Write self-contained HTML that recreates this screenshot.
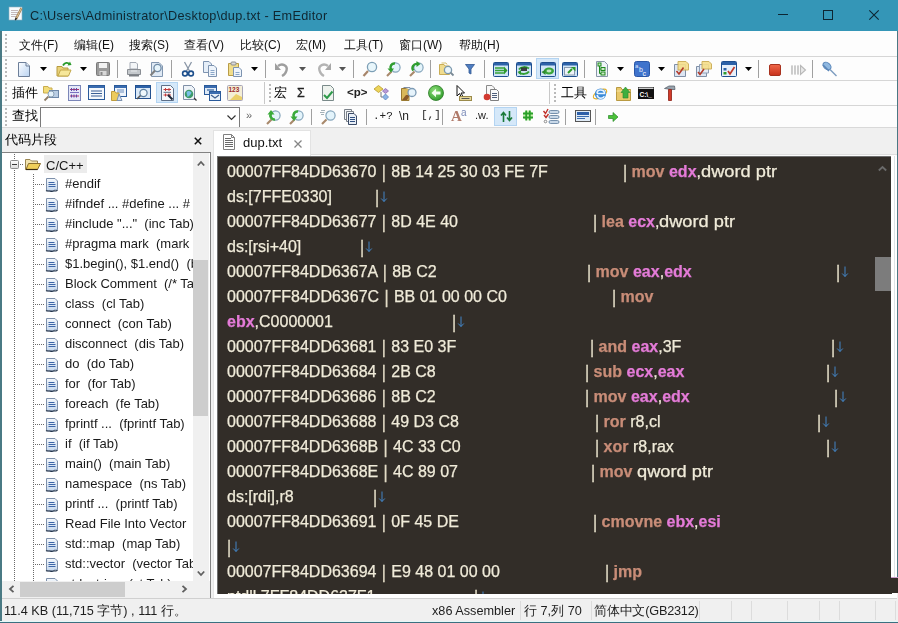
<!DOCTYPE html>
<html><head><meta charset="utf-8"><style>
*{margin:0;padding:0;box-sizing:border-box}
html,body{width:898px;height:623px;overflow:hidden;background:#f0f0f0;font-family:"Liberation Sans",sans-serif;color:#000;-webkit-font-smoothing:antialiased}
.a{position:absolute}
.t{position:absolute;white-space:pre;line-height:1;will-change:transform}
.hl{position:absolute;height:1px}
.vs{position:absolute;width:1px;background:#a8a8a8}
.grip{position:absolute;width:2px;background:repeating-linear-gradient(to bottom,#b9b9b9 0 2px,transparent 2px 4px)}
.menu{font-size:12px;top:39px;color:#111}
.ed{position:absolute;font-size:16px;color:#f0ebd9;-webkit-text-stroke-width:0.25px;white-space:pre;line-height:1;will-change:transform}
.kw{color:#c98d78;font-weight:bold}
.rg{color:#e47bd8;font-weight:bold}
.ar{color:#3d8fdc}
.bar{display:inline-block;transform:scaleY(1.12) translateY(0.8px);color:#e2dcc6}
.hb{margin:0 0.9px}
.arw{position:relative;display:inline-block;vertical-align:baseline;margin-left:1px;top:1px}
.tr{position:absolute;font-size:13px;color:#1a1a1a;white-space:pre;line-height:1;will-change:transform}
.st{position:absolute;font-size:12.7px;color:#1e1e1e;white-space:pre;line-height:1;will-change:transform}
svg{position:absolute;overflow:visible}
</style></head><body>
<div class="a" style="left:0;top:0;width:898px;height:31px;background:#3496b7"></div>
<div class="t" style="left:30px;top:10px;font-size:12.7px;letter-spacing:0.3px;color:#0f2630">C:\Users\Administrator\Desktop\dup.txt - EmEditor</div>
<svg style="left:9px;top:7px" width="14" height="14" viewBox="0 0 14 14"><rect x="0" y="0" width="13" height="13" fill="#f6fbfd" stroke="#8fb0c0" stroke-width=".6"/><path d="M2 3.5H9M2 5.5H9M2 7.5H8M2 9.5H7" stroke="#b8a8a8" stroke-width=".8"/><path d="M12.5 1L7 12" stroke="#a07a4a" stroke-width="2.4"/><path d="M12.5 1L7 12" stroke="#e8d0a8" stroke-width=".9"/><path d="M7.5 11L6.2 13" stroke="#222" stroke-width="1.4"/></svg>
<svg style="left:778px;top:14px" width="10" height="2" viewBox="0 0 10 2"><path d="M0 0.5H10" stroke="#0d2633" stroke-width="1"/></svg>
<svg style="left:823px;top:10px" width="10" height="10" viewBox="0 0 10 10"><rect x="0.5" y="0.5" width="9" height="9" fill="none" stroke="#0d2633"/></svg>
<svg style="left:869px;top:10px" width="10" height="10" viewBox="0 0 10 10"><path d="M0.3 0.3L9.7 9.7M9.7 0.3L0.3 9.7" stroke="#0d2633" stroke-width="1.1"/></svg>
<div class="a" style="left:2px;top:31px;width:895px;height:96px;background:#fdfdfd"></div>
<div class="hl" style="left:2px;top:56px;width:895px;background:#d6d6d6"></div>
<div class="hl" style="left:2px;top:80px;width:895px;background:#d6d6d6"></div>
<div class="hl" style="left:2px;top:105px;width:895px;background:#d6d6d6"></div>
<div class="hl" style="left:2px;top:127px;width:895px;background:#d9d9d9"></div>
<div class="grip" style="left:5px;top:34px;height:20px"></div>
<div class="grip" style="left:5px;top:59px;height:20px"></div>
<div class="grip" style="left:5px;top:83px;height:20px"></div>
<div class="grip" style="left:5px;top:108px;height:18px"></div>
<div class="t menu" style="left:19px">文件(F)</div>
<div class="t menu" style="left:74px">编辑(E)</div>
<div class="t menu" style="left:129px">搜索(S)</div>
<div class="t menu" style="left:184px">查看(V)</div>
<div class="t menu" style="left:240px">比较(C)</div>
<div class="t menu" style="left:296px">宏(M)</div>
<div class="t menu" style="left:344px">工具(T)</div>
<div class="t menu" style="left:399px">窗口(W)</div>
<div class="t menu" style="left:459px">帮助(H)</div>
<div class="t" style="left:12px;top:87px;font-size:12.5px">插件</div>
<div class="t" style="left:12px;top:110px;font-size:12.5px">查找</div>
<svg style="left:16px;top:61px" width="16" height="16" viewBox="0 0 16 16"><defs><linearGradient id="gnd" x1="0" y1="0" x2="1" y2="1"><stop offset="0" stop-color="#fdfeff"/><stop offset="1" stop-color="#b9d3f2"/></linearGradient></defs><path d="M2.5 1.5H10L13.5 5V15.5H2.5Z" fill="url(#gnd)" stroke="#6d7f99"/><path d="M10 1.5V5H13.5" fill="#dfe9f6" stroke="#6d7f99"/></svg>
<svg style="left:40px;top:67px" width="7" height="4" viewBox="0 0 7 4"><path d="M0 0H7L3.5 4Z" fill="#000"/></svg>
<svg style="left:56px;top:61px" width="16" height="16" viewBox="0 0 16 16"><path d="M1 5.5H6L7 7H12V15H1Z" fill="#e9d27a" stroke="#b79a3e"/><path d="M2 15L4.5 9H15L12.5 15Z" fill="#f6e79a" stroke="#c3a84a"/><path d="M7 4.5C8.5 1.5 12 1 13.5 3.5" fill="none" stroke="#2a9a2a" stroke-width="1.8"/><path d="M11.5 4.5L15.5 4L14 0.5Z" fill="#2a9a2a"/></svg>
<svg style="left:80px;top:67px" width="7" height="4" viewBox="0 0 7 4"><path d="M0 0H7L3.5 4Z" fill="#000"/></svg>
<svg style="left:95px;top:61px" width="16" height="16" viewBox="0 0 16 16"><rect x="1.5" y="1.5" width="13" height="13" rx="1" fill="#9a9a9a" stroke="#7a7a7a"/><rect x="4" y="2" width="8" height="5" fill="#f2f2f2"/><rect x="4.5" y="10" width="7" height="4.5" fill="#d8d8d8"/><rect x="5.5" y="11" width="2" height="3" fill="#888"/></svg>
<div class="vs" style="left:117px;top:60px;height:18px;background:#a0a0a0"></div>
<svg style="left:126px;top:61px" width="16" height="16" viewBox="0 0 16 16"><path d="M4 1.5H10L11.5 3V8H4Z" fill="#f4f6f8" stroke="#a4aab4"/><path d="M1.5 8.5H14.5V13.5H1.5Z" fill="#c4c8cc" stroke="#8a8e94"/><path d="M3 13.5H13V15.5H3Z" fill="#7a7e84"/><path d="M5 10H11" stroke="#e8eaec"/></svg>
<svg style="left:149px;top:61px" width="16" height="16" viewBox="0 0 16 16"><path d="M2.5 1.5H10L13.5 5V15.5H2.5Z" fill="#dfe9f4" stroke="#8196b0"/><circle cx="8.5" cy="7" r="3.6" fill="#e6f4fb" stroke="#6f8aa6" stroke-width="1.3"/><path d="M6 9.5L1.5 14.5" stroke="#7f7f7f" stroke-width="2"/></svg>
<div class="vs" style="left:171px;top:60px;height:18px;background:#a0a0a0"></div>
<svg style="left:180px;top:61px" width="16" height="16" viewBox="0 0 16 16"><path d="M4.5 1L9.5 10M11.5 1L6.5 10" stroke="#8a96a6" stroke-width="1.3"/><circle cx="5" cy="12.5" r="2.4" fill="none" stroke="#1d4f8c" stroke-width="1.6"/><circle cx="11" cy="12.5" r="2.4" fill="none" stroke="#1d4f8c" stroke-width="1.6"/></svg>
<svg style="left:202px;top:61px" width="16" height="16" viewBox="0 0 16 16"><path d="M1.5 0.5H7L9.5 3V11.5H1.5Z" fill="#e5eef8" stroke="#7d93b0"/><path d="M6.5 4.5H12L14.5 7V15.5H6.5Z" fill="#eef4fb" stroke="#7d93b0"/><path d="M8.5 9.5H12.5M8.5 11.5H12.5M8.5 13.5H12.5" stroke="#8aa6c8"/></svg>
<svg style="left:227px;top:61px" width="16" height="16" viewBox="0 0 16 16"><path d="M1.5 2.5H11.5V14.5H1.5Z" fill="#f1dd8a" stroke="#b89c48"/><rect x="4" y="1" width="5" height="3" rx="1" fill="#d9d9d9" stroke="#8d8d8d"/><path d="M6.5 6.5H12L14.5 9V15.5H6.5Z" fill="#eef4fb" stroke="#7d93b0"/><path d="M8.5 11.5H12.5M8.5 13.5H12.5" stroke="#8aa6c8"/></svg>
<svg style="left:251px;top:67px" width="7" height="4" viewBox="0 0 7 4"><path d="M0 0H7L3.5 4Z" fill="#000"/></svg>
<div class="vs" style="left:265px;top:60px;height:18px;background:#a0a0a0"></div>
<svg style="left:274px;top:61px" width="16" height="16" viewBox="0 0 16 16"><path d="M4 5C8 2 14 4 12.5 9.5C11.8 12 10 14 8 15" fill="none" stroke="#9e9e9e" stroke-width="2.4"/><path d="M1 2V9H7Z" fill="#9e9e9e"/></svg>
<svg style="left:299px;top:67px" width="7" height="4" viewBox="0 0 7 4"><path d="M0 0H7L3.5 4Z" fill="#555"/></svg>
<svg style="left:316px;top:61px" width="16" height="16" viewBox="0 0 16 16"><path d="M12 5C8 2 2 4 3.5 9.5C4.2 12 6 14 8 15" fill="none" stroke="#b4b4b4" stroke-width="2.4"/><path d="M15 2V9H9Z" fill="#a8a8a8"/></svg>
<svg style="left:339px;top:67px" width="7" height="4" viewBox="0 0 7 4"><path d="M0 0H7L3.5 4Z" fill="#555"/></svg>
<div class="vs" style="left:353px;top:60px;height:18px;background:#a0a0a0"></div>
<svg style="left:362px;top:61px" width="16" height="16" viewBox="0 0 16 16"><path d="M6 10L1.5 15" stroke="#a7856a" stroke-width="2.2"/><circle cx="10" cy="6" r="4.6" fill="#e8f6fb" stroke="#7d9fb6" stroke-width="1.3"/></svg>
<svg style="left:385px;top:61px" width="16" height="16" viewBox="0 0 16 16"><path d="M6.5 10.5L2 15" stroke="#a8896c" stroke-width="2.2"/><circle cx="10.5" cy="6.5" r="4.6" fill="#e4f4fb" stroke="#86a6bc" stroke-width="1.2"/><path d="M10 2.5A4 4 0 0 0 6 8.5" fill="none" stroke="#2f9e2f" stroke-width="2.4"/><path d="M2.5 7.5L6 11.5L9 7.5Z" fill="#2f9e2f"/></svg>
<svg style="left:408px;top:61px" width="16" height="16" viewBox="0 0 16 16"><path d="M6.5 10.5L2 15" stroke="#a8896c" stroke-width="2.2"/><circle cx="10.5" cy="6.5" r="4.6" fill="#e4f4fb" stroke="#86a6bc" stroke-width="1.2"/><path d="M5.5 9.5A4 4 0 0 1 9.5 3" fill="none" stroke="#2f9e2f" stroke-width="2.4"/><path d="M8.5 0L12.5 3L8.5 6Z" fill="#2f9e2f"/></svg>
<div class="vs" style="left:430px;top:60px;height:18px;background:#a0a0a0"></div>
<svg style="left:438px;top:61px" width="16" height="16" viewBox="0 0 16 16"><path d="M1.5 3.5H6L7 5H11.5V13.5H1.5Z" fill="#f0dc8e" stroke="#c9ad55"/><path d="M3.5 2H8L9 3.5" fill="none" stroke="#d7bf6a"/><circle cx="10" cy="9" r="3.6" fill="#eaf5fb" stroke="#7b98ad" stroke-width="1.3"/><path d="M12.5 11.5L15.5 14.5" stroke="#7a8a96" stroke-width="1.8"/></svg>
<svg style="left:465px;top:63px" width="10" height="12" viewBox="0 0 10 12"><path d="M0.5 1.5H9.5L6 6V11L4 10V6Z" fill="#4f7ec2" stroke="#2e5590" stroke-width="0.8"/></svg>
<div class="vs" style="left:484px;top:60px;height:18px;background:#a0a0a0"></div>
<svg style="left:493px;top:62px" width="16" height="16" viewBox="0 0 16 16"><rect x="0.5" y="0.5" width="15" height="14" rx="1" fill="#cfe4f7" stroke="#1f4f8f"/><rect x="1" y="1" width="14" height="2.5" fill="#2d62a8"/><path d="M2 6H11M2 8.5H11M2 11H11" stroke="#37a337" stroke-width="1.6"/><path d="M11 4.5L14.5 8.5L11 12.5Z" fill="#2e9a2e"/></svg>
<svg style="left:516px;top:62px" width="16" height="16" viewBox="0 0 16 16"><rect x="0.5" y="0.5" width="15" height="14" rx="1" fill="#cfe4f7" stroke="#1f4f8f"/><rect x="1" y="1" width="14" height="2.5" fill="#2d62a8"/><path d="M3 7.5C5 4.5 10 4.5 13 6.5" stroke="#34a134" stroke-width="2" fill="none"/><path d="M5 5.5H11V9H5Z" fill="#222" opacity=".85"/><path d="M13 9.5C11 12.5 6 12.5 3 10.5" stroke="#34a134" stroke-width="2" fill="none"/><path d="M1.5 10L5 8V13Z" fill="#2e9a2e"/></svg>
<div class="a" style="left:536px;top:58px;width:23px;height:21px;background:#d5e8f9;border:1px solid #b3d4f2"></div>
<svg style="left:540px;top:62px" width="16" height="16" viewBox="0 0 16 16"><rect x="0.5" y="0.5" width="15" height="14" rx="1" fill="#cfe4f7" stroke="#1f4f8f"/><rect x="1" y="1" width="14" height="2.5" fill="#2d62a8"/><ellipse cx="9" cy="9" rx="5" ry="3.4" fill="#3aa53a"/><ellipse cx="9" cy="9" rx="2.5" ry="1.4" fill="#bfe6bf"/><path d="M1.5 10L5.5 7.5V13Z" fill="#2e8a2e"/></svg>
<svg style="left:562px;top:62px" width="16" height="16" viewBox="0 0 16 16"><rect x="0.5" y="0.5" width="15" height="14" rx="1" fill="#cfe4f7" stroke="#1f4f8f"/><rect x="1" y="1" width="14" height="2.5" fill="#2d62a8"/><rect x="2.5" y="5.5" width="10" height="7.5" fill="#eef3f8" stroke="#8a9bb0"/><path d="M6 11L10 7" stroke="#2c9a2c" stroke-width="2"/><path d="M9 5L13.5 5L13.5 9.5Z" fill="#2c9a2c"/></svg>
<div class="vs" style="left:584px;top:60px;height:18px;background:#a0a0a0"></div>
<svg style="left:595px;top:61px" width="13" height="16" viewBox="0 0 13 16"><path d="M1.5 0.5H9.5L12.5 3.5V15.5H1.5Z" fill="#eef3f8" stroke="#8896a8"/><rect x="3" y="2" width="3" height="3" fill="#cde8c8" stroke="#1f8a1f"/><rect x="6" y="6.5" width="4" height="3" fill="#cde8c8" stroke="#1f8a1f"/><rect x="6" y="11" width="4" height="3" fill="#cde8c8" stroke="#1f8a1f"/><path d="M4.5 5V12.5H6M4.5 8H6" stroke="#1f8a1f" fill="none"/></svg>
<svg style="left:617px;top:67px" width="7" height="4" viewBox="0 0 7 4"><path d="M0 0H7L3.5 4Z" fill="#000"/></svg>
<svg style="left:634px;top:61px" width="16" height="16" viewBox="0 0 16 16"><rect x="0.5" y="0.5" width="15" height="15" rx="2" fill="#3f73cc" stroke="#2a56a6"/><text x="1" y="7" font-size="6" fill="#dfe9ff" font-family="Liberation Sans">a</text><text x="5" y="11" font-size="7" fill="#e8f0ff" font-family="Liberation Sans">b</text><text x="8.5" y="15" font-size="7" fill="#ffffff" font-family="Liberation Sans">c</text></svg>
<svg style="left:658px;top:67px" width="7" height="4" viewBox="0 0 7 4"><path d="M0 0H7L3.5 4Z" fill="#000"/></svg>
<svg style="left:673px;top:61px" width="16" height="16" viewBox="0 0 16 16"><path d="M1.5 3.5H12.5V15.5H1.5Z" fill="#dde6f3" stroke="#7f8fa6"/><path d="M5 0.5H13L15.5 3V9H5Z" fill="#f6df8a" stroke="#caa94e" opacity=".9"/><path d="M3.5 10L6 13L10.5 6.5" stroke="#b33a2a" stroke-width="1.6" fill="none"/></svg>
<svg style="left:696px;top:61px" width="16" height="16" viewBox="0 0 16 16"><path d="M0.5 5.5H10.5V15.5H0.5Z" fill="#dde6f3" stroke="#7f8fa6"/><path d="M3.5 3.5H12.5V12H3.5Z" fill="#e6ecf5" stroke="#8f9fb6"/><path d="M6 0.5H13L15.5 3V8H6Z" fill="#f6df8a" stroke="#caa94e" opacity=".9"/><path d="M2 11L4 13.5L8 8" stroke="#b33a2a" stroke-width="1.5" fill="none"/></svg>
<svg style="left:721px;top:61px" width="16" height="16" viewBox="0 0 16 16"><rect x="0.5" y="0.5" width="15" height="15" rx="1" fill="#e7f0fa" stroke="#1f4f8f"/><rect x="1" y="1" width="14" height="3" fill="#2d62a8"/><rect x="2.5" y="7" width="3" height="2.5" fill="#2d62a8"/><rect x="2.5" y="11" width="3" height="2.5" fill="#2e9a2e"/><path d="M7 10L9 13L13.5 6" stroke="#c0392b" stroke-width="1.7" fill="none"/></svg>
<svg style="left:745px;top:67px" width="7" height="4" viewBox="0 0 7 4"><path d="M0 0H7L3.5 4Z" fill="#000"/></svg>
<div class="vs" style="left:758px;top:60px;height:18px;background:#a0a0a0"></div>
<svg style="left:769px;top:64px" width="12" height="12" viewBox="0 0 12 12"><defs><linearGradient id="grs" x1="0" y1="0" x2="0" y2="1"><stop offset="0" stop-color="#f0684a"/><stop offset="1" stop-color="#c8321c"/></linearGradient></defs><rect x="0.5" y="0.5" width="11" height="11" rx="1.5" fill="url(#grs)" stroke="#a8321e"/></svg>
<svg style="left:791px;top:64px" width="15" height="12" viewBox="0 0 15 12"><path d="M1 1.5V10.5M4 1.5V10.5M7 1.5V10.5" stroke="#bdbdbd" stroke-width="2"/><path d="M1 1.5V10.5M4 1.5V10.5M7 1.5V10.5" stroke="#e6e6e6" stroke-width="0.7"/><path d="M9.5 1.5L14.5 6L9.5 10.5Z" fill="#e8e8e8" stroke="#b8b8b8" stroke-width="1.1"/></svg>
<div class="vs" style="left:812px;top:60px;height:18px;background:#a0a0a0"></div>
<svg style="left:821px;top:61px" width="16" height="16" viewBox="0 0 16 16"><ellipse cx="6" cy="5" rx="4.5" ry="3.2" transform="rotate(40 6 5)" fill="#8fb8e0" stroke="#5a86b8"/><path d="M9 8.5L15.5 15" stroke="#7d9cc0" stroke-width="1.4"/><path d="M2 4L8 10" stroke="#5a86b8" stroke-width="1.6"/></svg>
<svg style="left:43px;top:85px" width="16" height="16" viewBox="0 0 16 16"><path d="M0.5 1.5H5L6 3H9V8H0.5Z" fill="#f2dc78" stroke="#c8ab4c"/><rect x="6.5" y="5.5" width="9" height="7" fill="#b9cde3" stroke="#6d87a8"/><circle cx="8" cy="9" r="3" fill="#e3f1fa" stroke="#8aa0b4"/><path d="M5.5 11.5L1.5 15.5" stroke="#8d7c66" stroke-width="1.8"/></svg>
<svg style="left:68px;top:85px" width="13" height="16" viewBox="0 0 13 16"><rect x="0.5" y="0.5" width="12" height="15" fill="#e4e8f8" stroke="#7b86b8"/><path d="M2 4.5H11M2 11H11" stroke="#b0306a" stroke-width="1.2"/><path d="M3.5 3V6M6 3V6M8.5 3V6M3.5 9.5V12.5M6 9.5V12.5M8.5 9.5V12.5" stroke="#5b4aa8"/><path d="M2 7.5H11" stroke="#7a70c0"/></svg>
<svg style="left:88px;top:85px" width="17" height="16" viewBox="0 0 17 16"><rect x="0.5" y="0.5" width="16" height="14" fill="#f4f8fc" stroke="#2a5a9a"/><rect x="1" y="1" width="15" height="2" fill="#3a6cb0"/><path d="M3 6H14M3 8.5H14M3 11H14" stroke="#3a5f95" stroke-width="1.2"/></svg>
<svg style="left:111px;top:85px" width="16" height="16" viewBox="0 0 16 16"><rect x="3.5" y="0.5" width="12" height="11" fill="#eef4fb" stroke="#2a5a9a"/><rect x="4" y="1" width="11" height="2" fill="#3a6cb0"/><path d="M6 5H13M6 7H13" stroke="#6b8cbc"/><path d="M0.5 6.5H4L5 8H8V15.5H0.5Z" fill="#eccb5e" stroke="#bf9d3e"/><path d="M8 9L11 15.5H6Z" fill="#d6e2f2" stroke="#7d93b0"/></svg>
<svg style="left:135px;top:85px" width="16" height="16" viewBox="0 0 16 16"><rect x="0.5" y="0.5" width="15" height="13" fill="#dbe9f7" stroke="#22508f"/><rect x="1" y="1" width="14" height="2" fill="#2d62a8"/><circle cx="8.5" cy="8" r="3.6" fill="#eef7fc" stroke="#5d7f9f" stroke-width="1.2"/><path d="M5.5 10.5L2 14" stroke="#555" stroke-width="1.6"/></svg>
<div class="a" style="left:156px;top:82px;width:22px;height:21px;background:#d5e8f9;border:1px solid #b3d4f2"></div>
<svg style="left:161px;top:85px" width="13" height="16" viewBox="0 0 13 16"><path d="M0.5 0.5H9.5L12.5 3.5V15.5H0.5Z" fill="#f6f8fb" stroke="#5d6f88"/><path d="M2.5 4.5H10M2.5 10H10" stroke="#c23a3a" stroke-width="1.2"/><path d="M4.5 3V6M8 3V6M4.5 8.5V11.5M8 8.5V11.5" stroke="#c23a3a"/><path d="M2.5 7.3H10" stroke="#5d6f88"/><path d="M7 10L11.5 14.5" stroke="#1e2a3a" stroke-width="2"/></svg>
<svg style="left:183px;top:85px" width="14" height="16" viewBox="0 0 14 16"><path d="M0.5 0.5H8.5L11.5 3.5V14.5H0.5Z" fill="#eef3f8" stroke="#7f8fa6"/><circle cx="6" cy="9" r="4.3" fill="#3d9a6a"/><path d="M3.5 7C5 5.5 7 6 8.5 7.5C8 9.5 6 11 4.5 12" fill="#79c0e8"/><path d="M11 13L13.5 15.5" stroke="#333" stroke-width="1.2"/></svg>
<svg style="left:204px;top:85px" width="17" height="16" viewBox="0 0 17 16"><rect x="0.5" y="0.5" width="12" height="9" fill="#dfeaf6" stroke="#2a5a9a"/><rect x="1" y="1" width="11" height="2" fill="#3a6cb0"/><path d="M3 5H10" stroke="#4a74ac" stroke-width="1.4"/><rect x="5.5" y="6.5" width="11" height="9" fill="#e8f0f8" stroke="#2a5a9a"/><rect x="6" y="7" width="10" height="2" fill="#3a6cb0"/><path d="M7 10L11 13L15 10" stroke="#3d5f8f" fill="none" stroke-width="1.2"/></svg>
<svg style="left:227px;top:85px" width="16" height="16" viewBox="0 0 16 16"><rect x="0.5" y="0.5" width="15" height="15" rx="1" fill="#f4eed6" stroke="#a8a6b8"/><text x="1.5" y="7" font-size="6.5" fill="#9a2a2a" font-family="Liberation Sans" font-weight="bold">123</text><path d="M3 15L9 9L15 12V15Z" fill="#eacf6a"/></svg>
<div class="vs" style="left:264px;top:82px;height:22px;background:#c8c8c8"></div>
<div class="grip" style="left:269px;top:84px;height:19px"></div>
<div class="t" style="left:274px;top:87px;font-size:12.5px">宏</div>
<div class="t" style="left:297px;top:87px;font-size:12.5px;color:#222;-webkit-text-stroke-width:0.3px">Σ</div>
<svg style="left:322px;top:85px" width="12" height="16" viewBox="0 0 12 16"><path d="M0.5 0.5H8.5L11.5 3.5V15.5H0.5Z" fill="#eef3ee" stroke="#7a8a8a"/><path d="M2 10L5 13L10.5 6.5" stroke="#2e9a4a" stroke-width="2" fill="none"/></svg>
<div class="t" style="left:347px;top:87px;font-size:11.5px;font-weight:bold;color:#222">&lt;p&gt;</div>
<svg style="left:374px;top:85px" width="16" height="16" viewBox="0 0 16 16"><path d="M4.5 0.5L9 4L4.5 7.5L0 4Z" fill="#ecd45a" stroke="#b89a2a" stroke-width=".8"/><path d="M11.5 3.5L14.5 6L11.5 8.5L8.5 6Z" fill="#b79ad6" stroke="#8a6ab0" stroke-width=".8"/><path d="M11.5 9L14.5 12L11.5 15L8.5 12Z" fill="#8cb4e6" stroke="#5a84bc" stroke-width=".8"/><path d="M7 7V12H8.5" stroke="#777" fill="none"/></svg>
<svg style="left:401px;top:85px" width="16" height="16" viewBox="0 0 16 16"><path d="M0.5 3.5H8V15.5H0.5Z" fill="#d9b85a" stroke="#9a7a32"/><path d="M2.5 2.5H9L11 5" fill="#eef3f8" stroke="#7f8fa6"/><path d="M1 15L5 10H9L6 15Z" fill="#8a5a2a"/><circle cx="11" cy="7.5" r="4" fill="#e6f3fb" stroke="#7d9bb5" stroke-width="1.3"/></svg>
<svg style="left:428px;top:85px" width="16" height="16" viewBox="0 0 16 16"><defs><radialGradient id="ggc" cx=".4" cy=".35" r=".7"><stop offset="0" stop-color="#8fe07a"/><stop offset="1" stop-color="#2e9a2a"/></radialGradient></defs><circle cx="8" cy="8" r="7.5" fill="url(#ggc)" stroke="#2a7a24" stroke-width=".8"/><path d="M3.5 8L8 3.8V6.5H12.5V9.5H8V12.2Z" fill="#f4fff0"/></svg>
<svg style="left:456px;top:85px" width="16" height="16" viewBox="0 0 16 16"><path d="M1 0.5V11L3.5 8.5L5.5 12.5L7 11.7L5 8H8.5Z" fill="#fff" stroke="#111" stroke-width="1"/><rect x="3.5" y="11.5" width="12" height="4" fill="#e6d79a" stroke="#9a8a4a"/><path d="M5.5 13.5H13.5" stroke="#555"/></svg>
<svg style="left:483px;top:85px" width="16" height="16" viewBox="0 0 16 16"><path d="M3.5 0.5H9L11.5 3V11H3.5Z" fill="#f8f8f8" stroke="#8a8a8a"/><path d="M7.5 4.5H13.5L15.5 6.5V15.5H7.5Z" fill="#fafafa" stroke="#7f7f7f"/><path d="M9 8.5H14M9 10.5H14M9 12.5H14" stroke="#4f5f7a"/><circle cx="4" cy="12" r="3.3" fill="#d23a30"/></svg>
<div class="vs" style="left:549px;top:82px;height:22px;background:#c8c8c8"></div>
<div class="grip" style="left:554px;top:84px;height:19px"></div>
<div class="t" style="left:561px;top:87px;font-size:12.5px">工具</div>
<svg style="left:592px;top:85px" width="16" height="16" viewBox="0 0 16 16"><ellipse cx="8" cy="9" rx="7.5" ry="3.5" fill="none" stroke="#e3b02a" stroke-width="1.2" transform="rotate(-30 8 9)"/><circle cx="8.5" cy="9" r="5.6" fill="#3a8ad8"/><path d="M5 8.5H12.5C12.5 6 11 5 8.5 5C6.5 5 5 6.5 5 8.5M5.2 10C5.5 12 7 13.2 9 13.2C10.5 13.2 11.8 12.5 12.3 11.3" fill="none" stroke="#e8f4ff" stroke-width="1.6"/></svg>
<svg style="left:616px;top:85px" width="16" height="16" viewBox="0 0 16 16"><path d="M0.5 2.5H5L6 4.5H14.5V15.5H0.5Z" fill="#e9c86a" stroke="#b99a42"/><path d="M0.5 6H14.5" stroke="#f6e3a0"/><path d="M7 13V7.5H5L9.5 2L14 7.5H12V13Z" fill="#3fae3f" stroke="#2a8a2a" stroke-width=".6"/></svg>
<svg style="left:638px;top:85px" width="16" height="16" viewBox="0 0 16 16"><rect x="0" y="2" width="16" height="12" fill="#111"/><rect x="0.5" y="2.5" width="15" height="1.5" fill="#ccc"/><text x="1.5" y="11.5" font-size="6.5" fill="#fff" font-family="Liberation Sans" font-weight="bold">C:\_</text></svg>
<svg style="left:663px;top:85px" width="13" height="16" viewBox="0 0 13 16"><path d="M1.5 3.5L6 1H11.5L12 4.5L9 4.5Z" fill="#9aa4ae" stroke="#5a646e" stroke-width=".8"/><path d="M5.5 4.5H8.5V15.5H5.5Z" fill="#d23a2a" stroke="#8a1e14" stroke-width=".8"/></svg>
<div class="a" style="left:40px;top:107px;width:200px;height:20px;background:#fff;border:1px solid #7a7a7a;border-bottom:none"></div>
<svg style="left:227px;top:115px" width="9" height="6" viewBox="0 0 9 6"><path d="M0.5 0.5L4.5 4.5L8.5 0.5" fill="none" stroke="#333" stroke-width="1.2"/></svg>
<div class="t" style="left:246px;top:110px;font-size:11px;color:#666">»</div>
<svg style="left:265px;top:109px" width="16" height="16" viewBox="0 0 16 16"><path d="M6.5 10.5L2 15" stroke="#a8896c" stroke-width="2.2"/><circle cx="10.5" cy="6.5" r="4.6" fill="#e4f4fb" stroke="#86a6bc" stroke-width="1.2"/><path d="M10 10.5A4 4 0 0 1 6 4.5" fill="none" stroke="#3aaa3a" stroke-width="2.6"/><path d="M2.5 5.5L6 1L9.5 5.5Z" fill="#3aaa3a"/></svg>
<svg style="left:288px;top:109px" width="16" height="16" viewBox="0 0 16 16"><path d="M6.5 10.5L2 15" stroke="#a8896c" stroke-width="2.2"/><circle cx="10.5" cy="6.5" r="4.6" fill="#e4f4fb" stroke="#86a6bc" stroke-width="1.2"/><path d="M10 2.5A4 4 0 0 0 6 8.5" fill="none" stroke="#3aaa3a" stroke-width="2.6"/><path d="M2.5 7.5L6 12L9.5 7.5Z" fill="#3aaa3a"/></svg>
<div class="vs" style="left:311px;top:109px;height:16px;background:#a0a0a0"></div>
<svg style="left:320px;top:109px" width="16" height="16" viewBox="0 0 16 16"><path d="M6.5 10.5L2 15" stroke="#a8896c" stroke-width="2.2"/><circle cx="10.5" cy="6.5" r="4.6" fill="#e4f4fb" stroke="#86a6bc" stroke-width="1.2"/><path d="M1 1.5H5M0 3.5H4.5M1 5.5H4" stroke="#9aa8b0" stroke-width="0.9"/></svg>
<svg style="left:344px;top:109px" width="13" height="16" viewBox="0 0 13 16"><path d="M0.5 0.5H7.5V10.5H0.5Z" fill="#f4f6f8" stroke="#7a8088"/><path d="M2.5 2.5H9.5V12.5H2.5Z" fill="#f4f6f8" stroke="#7a8088"/><path d="M4.5 4.5H10L12.5 7V15.5H4.5Z" fill="#e8eef6" stroke="#3a4a66"/><path d="M6 8.5H11M6 10.5H11M6 12.5H11" stroke="#2f4f80"/></svg>
<div class="vs" style="left:366px;top:109px;height:16px;background:#a0a0a0"></div>
<div class="t" style="left:373px;top:111px;font-size:11px;color:#222;font-family:'Liberation Mono'">.+?</div>
<div class="t" style="left:399px;top:110px;font-size:12px;color:#222">\n</div>
<div class="t" style="left:421px;top:110px;font-size:11px;color:#222;font-family:'Liberation Mono'">[,]</div>
<div class="vs" style="left:442px;top:109px;height:16px;background:#a0a0a0"></div>
<div class="t" style="left:451px;top:109px;font-size:15px;color:#b07a6a;font-family:'Liberation Serif';font-weight:bold">A</div>
<div class="t" style="left:461px;top:108px;font-size:10px;color:#7a8ab8">a</div>
<div class="t" style="left:475px;top:110px;font-size:11px;color:#222">.w.</div>
<div class="a" style="left:494px;top:107px;width:23px;height:19px;background:#d5e8f9;border:1px solid #b3d4f2"></div>
<svg style="left:500px;top:110px" width="13" height="13" viewBox="0 0 13 13"><path d="M3.5 12V3M1 5.5L3.5 2.5L6 5.5" stroke="#1a7a3a" stroke-width="1.6" fill="none"/><path d="M9.5 1V10M7 7.5L9.5 10.5L12 7.5" stroke="#1a7a3a" stroke-width="1.6" fill="none"/></svg>
<svg style="left:523px;top:110px" width="11" height="11" viewBox="0 0 11 11"><circle cx="5" cy="5.5" r="5" fill="#c8f0b0"/><path d="M3.2 0.5V10.5M6.8 0.5V10.5M0 3.5H10M0 7.5H10" stroke="#2aa02a" stroke-width="1.8"/></svg>
<svg style="left:543px;top:109px" width="17" height="16" viewBox="0 0 17 16"><path d="M0.5 2L2.5 4.5L5 0" stroke="#c0302a" stroke-width="1.4" fill="none"/><path d="M1 6L3 8.5L5.5 5" stroke="#c0302a" stroke-width="1.4" fill="none"/><circle cx="2.5" cy="12.5" r="1.3" fill="none" stroke="#888"/><rect x="6" y="1.5" width="10" height="3" rx="1.5" fill="#c8d8e8" stroke="#5a7a9a" stroke-width=".8"/><rect x="6" y="6.5" width="10" height="3" rx="1.5" fill="#c8d8e8" stroke="#5a7a9a" stroke-width=".8"/><rect x="6" y="11.5" width="10" height="3" rx="1.5" fill="#c8d8e8" stroke="#5a7a9a" stroke-width=".8"/></svg>
<div class="vs" style="left:565px;top:109px;height:16px;background:#a0a0a0"></div>
<svg style="left:575px;top:110px" width="16" height="12" viewBox="0 0 16 12"><rect x="0.5" y="0.5" width="15" height="11" fill="#e0ebf6" stroke="#555"/><rect x="2" y="2" width="12" height="3" fill="#2d5fa8"/><path d="M2 6.5H14M2 8.5H10" stroke="#3a6cb0"/></svg>
<div class="vs" style="left:595px;top:109px;height:16px;background:#a0a0a0"></div>
<svg style="left:608px;top:112px" width="11" height="10" viewBox="0 0 11 10"><path d="M0.5 3.5H5V0.5L10 5L5 9.5V6.5H0.5Z" fill="#4cc23a" stroke="#2a8a2a" stroke-width=".7"/></svg>
<div class="t" style="left:5px;top:134px;font-size:12.5px">代码片段</div>
<div class="a" style="left:2px;top:152px;width:209px;height:447px;background:#fff;border-top:1px solid #828282;border-right:1px solid #828282"></div>
<div class="a" style="left:2px;top:153px;width:191px;height:428px;overflow:hidden">
<div class="a" style="left:12px;top:1px;width:1px;height:6px;background:repeating-linear-gradient(to bottom,#6a6a6a 0 1px,transparent 1px 2px)"></div>
<div class="a" style="left:12px;top:17px;width:1px;height:420px;background:repeating-linear-gradient(to bottom,#6a6a6a 0 1px,transparent 1px 2px)"></div>
<div class="a" style="left:31px;top:21px;width:1px;height:420px;background:repeating-linear-gradient(to bottom,#6a6a6a 0 1px,transparent 1px 2px)"></div>
<div class="a" style="left:18px;top:11px;width:4px;height:1px;background:repeating-linear-gradient(to right,#6a6a6a 0 1px,transparent 1px 2px)"></div>
<svg style="left:8px;top:7px" width="9" height="9" viewBox="0 0 9 9"><defs><linearGradient id="gbx" x1="0" y1="0" x2="0" y2="1"><stop offset="0" stop-color="#fff"/><stop offset="1" stop-color="#dcdcdc"/></linearGradient></defs><rect x="0.5" y="0.5" width="8" height="8" rx="1" fill="url(#gbx)" stroke="#8c8c8c"/><path d="M2 4.5H7" stroke="#3a3a3a"/></svg>
<svg style="left:23px;top:5px" width="16" height="12" viewBox="0 0 16 12"><path d="M0.5 1.5H5L6.5 3H12.5V11.5H0.5Z" fill="#f2e4b0" stroke="#9a8652"/><path d="M1 11.5L3.5 5.5H15.5L12.5 11.5Z" fill="#f0cf5a" stroke="#8a6e2e"/><path d="M1 11.5H12.5" stroke="#3a2a10" stroke-width="1.2"/></svg>
<div class="a" style="left:42px;top:2px;width:43px;height:18px;background:#ececec"></div>
<div class="tr" style="left:44px;top:6px">C/C++</div>
<div class="a" style="left:33px;top:31px;width:9px;height:1px;background:repeating-linear-gradient(to right,#6a6a6a 0 1px,transparent 1px 2px)"></div>
<svg style="left:44px;top:25px" width="12" height="14" viewBox="0 0 12 14"><defs><linearGradient id="gsn" x1="0" y1="0" x2="0" y2="1"><stop offset="0" stop-color="#f4f8fc"/><stop offset="1" stop-color="#c6d8ee"/></linearGradient></defs><path d="M0.5 0.5H9L11.5 3V11.5C10 12.5 9 11.5 7.5 12.5C6 13.5 4.5 12 3 12.8C2 13.3 1 12.5 0.5 12Z" fill="url(#gsn)" stroke="#7e90aa"/><path d="M2.5 4.5H8.5M2.5 6.5H9.5M2.5 8.5H9.5" stroke="#3d66a8" stroke-width="1"/><path d="M0 12.5C1.5 13.5 3 12.5 4.5 13.2C6 14 7 12.5 9 13C10 13.2 11 12.8 11.5 12" stroke="#22334a" fill="none" stroke-width="1.1"/></svg>
<div class="tr" style="left:63px;top:24px">#endif</div>
<div class="a" style="left:33px;top:51px;width:9px;height:1px;background:repeating-linear-gradient(to right,#6a6a6a 0 1px,transparent 1px 2px)"></div>
<svg style="left:44px;top:45px" width="12" height="14" viewBox="0 0 12 14"><defs><linearGradient id="gsn" x1="0" y1="0" x2="0" y2="1"><stop offset="0" stop-color="#f4f8fc"/><stop offset="1" stop-color="#c6d8ee"/></linearGradient></defs><path d="M0.5 0.5H9L11.5 3V11.5C10 12.5 9 11.5 7.5 12.5C6 13.5 4.5 12 3 12.8C2 13.3 1 12.5 0.5 12Z" fill="url(#gsn)" stroke="#7e90aa"/><path d="M2.5 4.5H8.5M2.5 6.5H9.5M2.5 8.5H9.5" stroke="#3d66a8" stroke-width="1"/><path d="M0 12.5C1.5 13.5 3 12.5 4.5 13.2C6 14 7 12.5 9 13C10 13.2 11 12.8 11.5 12" stroke="#22334a" fill="none" stroke-width="1.1"/></svg>
<div class="tr" style="left:63px;top:44px">#ifndef ... #define ... #</div>
<div class="a" style="left:33px;top:71px;width:9px;height:1px;background:repeating-linear-gradient(to right,#6a6a6a 0 1px,transparent 1px 2px)"></div>
<svg style="left:44px;top:65px" width="12" height="14" viewBox="0 0 12 14"><defs><linearGradient id="gsn" x1="0" y1="0" x2="0" y2="1"><stop offset="0" stop-color="#f4f8fc"/><stop offset="1" stop-color="#c6d8ee"/></linearGradient></defs><path d="M0.5 0.5H9L11.5 3V11.5C10 12.5 9 11.5 7.5 12.5C6 13.5 4.5 12 3 12.8C2 13.3 1 12.5 0.5 12Z" fill="url(#gsn)" stroke="#7e90aa"/><path d="M2.5 4.5H8.5M2.5 6.5H9.5M2.5 8.5H9.5" stroke="#3d66a8" stroke-width="1"/><path d="M0 12.5C1.5 13.5 3 12.5 4.5 13.2C6 14 7 12.5 9 13C10 13.2 11 12.8 11.5 12" stroke="#22334a" fill="none" stroke-width="1.1"/></svg>
<div class="tr" style="left:63px;top:64px">#include "..."  (inc Tab)</div>
<div class="a" style="left:33px;top:91px;width:9px;height:1px;background:repeating-linear-gradient(to right,#6a6a6a 0 1px,transparent 1px 2px)"></div>
<svg style="left:44px;top:85px" width="12" height="14" viewBox="0 0 12 14"><defs><linearGradient id="gsn" x1="0" y1="0" x2="0" y2="1"><stop offset="0" stop-color="#f4f8fc"/><stop offset="1" stop-color="#c6d8ee"/></linearGradient></defs><path d="M0.5 0.5H9L11.5 3V11.5C10 12.5 9 11.5 7.5 12.5C6 13.5 4.5 12 3 12.8C2 13.3 1 12.5 0.5 12Z" fill="url(#gsn)" stroke="#7e90aa"/><path d="M2.5 4.5H8.5M2.5 6.5H9.5M2.5 8.5H9.5" stroke="#3d66a8" stroke-width="1"/><path d="M0 12.5C1.5 13.5 3 12.5 4.5 13.2C6 14 7 12.5 9 13C10 13.2 11 12.8 11.5 12" stroke="#22334a" fill="none" stroke-width="1.1"/></svg>
<div class="tr" style="left:63px;top:84px">#pragma mark  (mark Tab)</div>
<div class="a" style="left:33px;top:111px;width:9px;height:1px;background:repeating-linear-gradient(to right,#6a6a6a 0 1px,transparent 1px 2px)"></div>
<svg style="left:44px;top:105px" width="12" height="14" viewBox="0 0 12 14"><defs><linearGradient id="gsn" x1="0" y1="0" x2="0" y2="1"><stop offset="0" stop-color="#f4f8fc"/><stop offset="1" stop-color="#c6d8ee"/></linearGradient></defs><path d="M0.5 0.5H9L11.5 3V11.5C10 12.5 9 11.5 7.5 12.5C6 13.5 4.5 12 3 12.8C2 13.3 1 12.5 0.5 12Z" fill="url(#gsn)" stroke="#7e90aa"/><path d="M2.5 4.5H8.5M2.5 6.5H9.5M2.5 8.5H9.5" stroke="#3d66a8" stroke-width="1"/><path d="M0 12.5C1.5 13.5 3 12.5 4.5 13.2C6 14 7 12.5 9 13C10 13.2 11 12.8 11.5 12" stroke="#22334a" fill="none" stroke-width="1.1"/></svg>
<div class="tr" style="left:63px;top:104px">$1.begin(), $1.end()  (b Tab)</div>
<div class="a" style="left:33px;top:131px;width:9px;height:1px;background:repeating-linear-gradient(to right,#6a6a6a 0 1px,transparent 1px 2px)"></div>
<svg style="left:44px;top:125px" width="12" height="14" viewBox="0 0 12 14"><defs><linearGradient id="gsn" x1="0" y1="0" x2="0" y2="1"><stop offset="0" stop-color="#f4f8fc"/><stop offset="1" stop-color="#c6d8ee"/></linearGradient></defs><path d="M0.5 0.5H9L11.5 3V11.5C10 12.5 9 11.5 7.5 12.5C6 13.5 4.5 12 3 12.8C2 13.3 1 12.5 0.5 12Z" fill="url(#gsn)" stroke="#7e90aa"/><path d="M2.5 4.5H8.5M2.5 6.5H9.5M2.5 8.5H9.5" stroke="#3d66a8" stroke-width="1"/><path d="M0 12.5C1.5 13.5 3 12.5 4.5 13.2C6 14 7 12.5 9 13C10 13.2 11 12.8 11.5 12" stroke="#22334a" fill="none" stroke-width="1.1"/></svg>
<div class="tr" style="left:63px;top:124px">Block Comment  (/* Tab)</div>
<div class="a" style="left:33px;top:151px;width:9px;height:1px;background:repeating-linear-gradient(to right,#6a6a6a 0 1px,transparent 1px 2px)"></div>
<svg style="left:44px;top:145px" width="12" height="14" viewBox="0 0 12 14"><defs><linearGradient id="gsn" x1="0" y1="0" x2="0" y2="1"><stop offset="0" stop-color="#f4f8fc"/><stop offset="1" stop-color="#c6d8ee"/></linearGradient></defs><path d="M0.5 0.5H9L11.5 3V11.5C10 12.5 9 11.5 7.5 12.5C6 13.5 4.5 12 3 12.8C2 13.3 1 12.5 0.5 12Z" fill="url(#gsn)" stroke="#7e90aa"/><path d="M2.5 4.5H8.5M2.5 6.5H9.5M2.5 8.5H9.5" stroke="#3d66a8" stroke-width="1"/><path d="M0 12.5C1.5 13.5 3 12.5 4.5 13.2C6 14 7 12.5 9 13C10 13.2 11 12.8 11.5 12" stroke="#22334a" fill="none" stroke-width="1.1"/></svg>
<div class="tr" style="left:63px;top:144px">class  (cl Tab)</div>
<div class="a" style="left:33px;top:171px;width:9px;height:1px;background:repeating-linear-gradient(to right,#6a6a6a 0 1px,transparent 1px 2px)"></div>
<svg style="left:44px;top:165px" width="12" height="14" viewBox="0 0 12 14"><defs><linearGradient id="gsn" x1="0" y1="0" x2="0" y2="1"><stop offset="0" stop-color="#f4f8fc"/><stop offset="1" stop-color="#c6d8ee"/></linearGradient></defs><path d="M0.5 0.5H9L11.5 3V11.5C10 12.5 9 11.5 7.5 12.5C6 13.5 4.5 12 3 12.8C2 13.3 1 12.5 0.5 12Z" fill="url(#gsn)" stroke="#7e90aa"/><path d="M2.5 4.5H8.5M2.5 6.5H9.5M2.5 8.5H9.5" stroke="#3d66a8" stroke-width="1"/><path d="M0 12.5C1.5 13.5 3 12.5 4.5 13.2C6 14 7 12.5 9 13C10 13.2 11 12.8 11.5 12" stroke="#22334a" fill="none" stroke-width="1.1"/></svg>
<div class="tr" style="left:63px;top:164px">connect  (con Tab)</div>
<div class="a" style="left:33px;top:191px;width:9px;height:1px;background:repeating-linear-gradient(to right,#6a6a6a 0 1px,transparent 1px 2px)"></div>
<svg style="left:44px;top:185px" width="12" height="14" viewBox="0 0 12 14"><defs><linearGradient id="gsn" x1="0" y1="0" x2="0" y2="1"><stop offset="0" stop-color="#f4f8fc"/><stop offset="1" stop-color="#c6d8ee"/></linearGradient></defs><path d="M0.5 0.5H9L11.5 3V11.5C10 12.5 9 11.5 7.5 12.5C6 13.5 4.5 12 3 12.8C2 13.3 1 12.5 0.5 12Z" fill="url(#gsn)" stroke="#7e90aa"/><path d="M2.5 4.5H8.5M2.5 6.5H9.5M2.5 8.5H9.5" stroke="#3d66a8" stroke-width="1"/><path d="M0 12.5C1.5 13.5 3 12.5 4.5 13.2C6 14 7 12.5 9 13C10 13.2 11 12.8 11.5 12" stroke="#22334a" fill="none" stroke-width="1.1"/></svg>
<div class="tr" style="left:63px;top:184px">disconnect  (dis Tab)</div>
<div class="a" style="left:33px;top:211px;width:9px;height:1px;background:repeating-linear-gradient(to right,#6a6a6a 0 1px,transparent 1px 2px)"></div>
<svg style="left:44px;top:205px" width="12" height="14" viewBox="0 0 12 14"><defs><linearGradient id="gsn" x1="0" y1="0" x2="0" y2="1"><stop offset="0" stop-color="#f4f8fc"/><stop offset="1" stop-color="#c6d8ee"/></linearGradient></defs><path d="M0.5 0.5H9L11.5 3V11.5C10 12.5 9 11.5 7.5 12.5C6 13.5 4.5 12 3 12.8C2 13.3 1 12.5 0.5 12Z" fill="url(#gsn)" stroke="#7e90aa"/><path d="M2.5 4.5H8.5M2.5 6.5H9.5M2.5 8.5H9.5" stroke="#3d66a8" stroke-width="1"/><path d="M0 12.5C1.5 13.5 3 12.5 4.5 13.2C6 14 7 12.5 9 13C10 13.2 11 12.8 11.5 12" stroke="#22334a" fill="none" stroke-width="1.1"/></svg>
<div class="tr" style="left:63px;top:204px">do  (do Tab)</div>
<div class="a" style="left:33px;top:231px;width:9px;height:1px;background:repeating-linear-gradient(to right,#6a6a6a 0 1px,transparent 1px 2px)"></div>
<svg style="left:44px;top:225px" width="12" height="14" viewBox="0 0 12 14"><defs><linearGradient id="gsn" x1="0" y1="0" x2="0" y2="1"><stop offset="0" stop-color="#f4f8fc"/><stop offset="1" stop-color="#c6d8ee"/></linearGradient></defs><path d="M0.5 0.5H9L11.5 3V11.5C10 12.5 9 11.5 7.5 12.5C6 13.5 4.5 12 3 12.8C2 13.3 1 12.5 0.5 12Z" fill="url(#gsn)" stroke="#7e90aa"/><path d="M2.5 4.5H8.5M2.5 6.5H9.5M2.5 8.5H9.5" stroke="#3d66a8" stroke-width="1"/><path d="M0 12.5C1.5 13.5 3 12.5 4.5 13.2C6 14 7 12.5 9 13C10 13.2 11 12.8 11.5 12" stroke="#22334a" fill="none" stroke-width="1.1"/></svg>
<div class="tr" style="left:63px;top:224px">for  (for Tab)</div>
<div class="a" style="left:33px;top:251px;width:9px;height:1px;background:repeating-linear-gradient(to right,#6a6a6a 0 1px,transparent 1px 2px)"></div>
<svg style="left:44px;top:245px" width="12" height="14" viewBox="0 0 12 14"><defs><linearGradient id="gsn" x1="0" y1="0" x2="0" y2="1"><stop offset="0" stop-color="#f4f8fc"/><stop offset="1" stop-color="#c6d8ee"/></linearGradient></defs><path d="M0.5 0.5H9L11.5 3V11.5C10 12.5 9 11.5 7.5 12.5C6 13.5 4.5 12 3 12.8C2 13.3 1 12.5 0.5 12Z" fill="url(#gsn)" stroke="#7e90aa"/><path d="M2.5 4.5H8.5M2.5 6.5H9.5M2.5 8.5H9.5" stroke="#3d66a8" stroke-width="1"/><path d="M0 12.5C1.5 13.5 3 12.5 4.5 13.2C6 14 7 12.5 9 13C10 13.2 11 12.8 11.5 12" stroke="#22334a" fill="none" stroke-width="1.1"/></svg>
<div class="tr" style="left:63px;top:244px">foreach  (fe Tab)</div>
<div class="a" style="left:33px;top:271px;width:9px;height:1px;background:repeating-linear-gradient(to right,#6a6a6a 0 1px,transparent 1px 2px)"></div>
<svg style="left:44px;top:265px" width="12" height="14" viewBox="0 0 12 14"><defs><linearGradient id="gsn" x1="0" y1="0" x2="0" y2="1"><stop offset="0" stop-color="#f4f8fc"/><stop offset="1" stop-color="#c6d8ee"/></linearGradient></defs><path d="M0.5 0.5H9L11.5 3V11.5C10 12.5 9 11.5 7.5 12.5C6 13.5 4.5 12 3 12.8C2 13.3 1 12.5 0.5 12Z" fill="url(#gsn)" stroke="#7e90aa"/><path d="M2.5 4.5H8.5M2.5 6.5H9.5M2.5 8.5H9.5" stroke="#3d66a8" stroke-width="1"/><path d="M0 12.5C1.5 13.5 3 12.5 4.5 13.2C6 14 7 12.5 9 13C10 13.2 11 12.8 11.5 12" stroke="#22334a" fill="none" stroke-width="1.1"/></svg>
<div class="tr" style="left:63px;top:264px">fprintf ...  (fprintf Tab)</div>
<div class="a" style="left:33px;top:291px;width:9px;height:1px;background:repeating-linear-gradient(to right,#6a6a6a 0 1px,transparent 1px 2px)"></div>
<svg style="left:44px;top:285px" width="12" height="14" viewBox="0 0 12 14"><defs><linearGradient id="gsn" x1="0" y1="0" x2="0" y2="1"><stop offset="0" stop-color="#f4f8fc"/><stop offset="1" stop-color="#c6d8ee"/></linearGradient></defs><path d="M0.5 0.5H9L11.5 3V11.5C10 12.5 9 11.5 7.5 12.5C6 13.5 4.5 12 3 12.8C2 13.3 1 12.5 0.5 12Z" fill="url(#gsn)" stroke="#7e90aa"/><path d="M2.5 4.5H8.5M2.5 6.5H9.5M2.5 8.5H9.5" stroke="#3d66a8" stroke-width="1"/><path d="M0 12.5C1.5 13.5 3 12.5 4.5 13.2C6 14 7 12.5 9 13C10 13.2 11 12.8 11.5 12" stroke="#22334a" fill="none" stroke-width="1.1"/></svg>
<div class="tr" style="left:63px;top:284px">if  (if Tab)</div>
<div class="a" style="left:33px;top:311px;width:9px;height:1px;background:repeating-linear-gradient(to right,#6a6a6a 0 1px,transparent 1px 2px)"></div>
<svg style="left:44px;top:305px" width="12" height="14" viewBox="0 0 12 14"><defs><linearGradient id="gsn" x1="0" y1="0" x2="0" y2="1"><stop offset="0" stop-color="#f4f8fc"/><stop offset="1" stop-color="#c6d8ee"/></linearGradient></defs><path d="M0.5 0.5H9L11.5 3V11.5C10 12.5 9 11.5 7.5 12.5C6 13.5 4.5 12 3 12.8C2 13.3 1 12.5 0.5 12Z" fill="url(#gsn)" stroke="#7e90aa"/><path d="M2.5 4.5H8.5M2.5 6.5H9.5M2.5 8.5H9.5" stroke="#3d66a8" stroke-width="1"/><path d="M0 12.5C1.5 13.5 3 12.5 4.5 13.2C6 14 7 12.5 9 13C10 13.2 11 12.8 11.5 12" stroke="#22334a" fill="none" stroke-width="1.1"/></svg>
<div class="tr" style="left:63px;top:304px">main()  (main Tab)</div>
<div class="a" style="left:33px;top:331px;width:9px;height:1px;background:repeating-linear-gradient(to right,#6a6a6a 0 1px,transparent 1px 2px)"></div>
<svg style="left:44px;top:325px" width="12" height="14" viewBox="0 0 12 14"><defs><linearGradient id="gsn" x1="0" y1="0" x2="0" y2="1"><stop offset="0" stop-color="#f4f8fc"/><stop offset="1" stop-color="#c6d8ee"/></linearGradient></defs><path d="M0.5 0.5H9L11.5 3V11.5C10 12.5 9 11.5 7.5 12.5C6 13.5 4.5 12 3 12.8C2 13.3 1 12.5 0.5 12Z" fill="url(#gsn)" stroke="#7e90aa"/><path d="M2.5 4.5H8.5M2.5 6.5H9.5M2.5 8.5H9.5" stroke="#3d66a8" stroke-width="1"/><path d="M0 12.5C1.5 13.5 3 12.5 4.5 13.2C6 14 7 12.5 9 13C10 13.2 11 12.8 11.5 12" stroke="#22334a" fill="none" stroke-width="1.1"/></svg>
<div class="tr" style="left:63px;top:324px">namespace  (ns Tab)</div>
<div class="a" style="left:33px;top:351px;width:9px;height:1px;background:repeating-linear-gradient(to right,#6a6a6a 0 1px,transparent 1px 2px)"></div>
<svg style="left:44px;top:345px" width="12" height="14" viewBox="0 0 12 14"><defs><linearGradient id="gsn" x1="0" y1="0" x2="0" y2="1"><stop offset="0" stop-color="#f4f8fc"/><stop offset="1" stop-color="#c6d8ee"/></linearGradient></defs><path d="M0.5 0.5H9L11.5 3V11.5C10 12.5 9 11.5 7.5 12.5C6 13.5 4.5 12 3 12.8C2 13.3 1 12.5 0.5 12Z" fill="url(#gsn)" stroke="#7e90aa"/><path d="M2.5 4.5H8.5M2.5 6.5H9.5M2.5 8.5H9.5" stroke="#3d66a8" stroke-width="1"/><path d="M0 12.5C1.5 13.5 3 12.5 4.5 13.2C6 14 7 12.5 9 13C10 13.2 11 12.8 11.5 12" stroke="#22334a" fill="none" stroke-width="1.1"/></svg>
<div class="tr" style="left:63px;top:344px">printf ...  (printf Tab)</div>
<div class="a" style="left:33px;top:371px;width:9px;height:1px;background:repeating-linear-gradient(to right,#6a6a6a 0 1px,transparent 1px 2px)"></div>
<svg style="left:44px;top:365px" width="12" height="14" viewBox="0 0 12 14"><defs><linearGradient id="gsn" x1="0" y1="0" x2="0" y2="1"><stop offset="0" stop-color="#f4f8fc"/><stop offset="1" stop-color="#c6d8ee"/></linearGradient></defs><path d="M0.5 0.5H9L11.5 3V11.5C10 12.5 9 11.5 7.5 12.5C6 13.5 4.5 12 3 12.8C2 13.3 1 12.5 0.5 12Z" fill="url(#gsn)" stroke="#7e90aa"/><path d="M2.5 4.5H8.5M2.5 6.5H9.5M2.5 8.5H9.5" stroke="#3d66a8" stroke-width="1"/><path d="M0 12.5C1.5 13.5 3 12.5 4.5 13.2C6 14 7 12.5 9 13C10 13.2 11 12.8 11.5 12" stroke="#22334a" fill="none" stroke-width="1.1"/></svg>
<div class="tr" style="left:63px;top:364px">Read File Into Vector</div>
<div class="a" style="left:33px;top:391px;width:9px;height:1px;background:repeating-linear-gradient(to right,#6a6a6a 0 1px,transparent 1px 2px)"></div>
<svg style="left:44px;top:385px" width="12" height="14" viewBox="0 0 12 14"><defs><linearGradient id="gsn" x1="0" y1="0" x2="0" y2="1"><stop offset="0" stop-color="#f4f8fc"/><stop offset="1" stop-color="#c6d8ee"/></linearGradient></defs><path d="M0.5 0.5H9L11.5 3V11.5C10 12.5 9 11.5 7.5 12.5C6 13.5 4.5 12 3 12.8C2 13.3 1 12.5 0.5 12Z" fill="url(#gsn)" stroke="#7e90aa"/><path d="M2.5 4.5H8.5M2.5 6.5H9.5M2.5 8.5H9.5" stroke="#3d66a8" stroke-width="1"/><path d="M0 12.5C1.5 13.5 3 12.5 4.5 13.2C6 14 7 12.5 9 13C10 13.2 11 12.8 11.5 12" stroke="#22334a" fill="none" stroke-width="1.1"/></svg>
<div class="tr" style="left:63px;top:384px">std::map  (map Tab)</div>
<div class="a" style="left:33px;top:411px;width:9px;height:1px;background:repeating-linear-gradient(to right,#6a6a6a 0 1px,transparent 1px 2px)"></div>
<svg style="left:44px;top:405px" width="12" height="14" viewBox="0 0 12 14"><defs><linearGradient id="gsn" x1="0" y1="0" x2="0" y2="1"><stop offset="0" stop-color="#f4f8fc"/><stop offset="1" stop-color="#c6d8ee"/></linearGradient></defs><path d="M0.5 0.5H9L11.5 3V11.5C10 12.5 9 11.5 7.5 12.5C6 13.5 4.5 12 3 12.8C2 13.3 1 12.5 0.5 12Z" fill="url(#gsn)" stroke="#7e90aa"/><path d="M2.5 4.5H8.5M2.5 6.5H9.5M2.5 8.5H9.5" stroke="#3d66a8" stroke-width="1"/><path d="M0 12.5C1.5 13.5 3 12.5 4.5 13.2C6 14 7 12.5 9 13C10 13.2 11 12.8 11.5 12" stroke="#22334a" fill="none" stroke-width="1.1"/></svg>
<div class="tr" style="left:63px;top:404px">std::vector  (vector Tab)</div>
<div class="a" style="left:33px;top:431px;width:9px;height:1px;background:repeating-linear-gradient(to right,#6a6a6a 0 1px,transparent 1px 2px)"></div>
<svg style="left:44px;top:425px" width="12" height="14" viewBox="0 0 12 14"><defs><linearGradient id="gsn" x1="0" y1="0" x2="0" y2="1"><stop offset="0" stop-color="#f4f8fc"/><stop offset="1" stop-color="#c6d8ee"/></linearGradient></defs><path d="M0.5 0.5H9L11.5 3V11.5C10 12.5 9 11.5 7.5 12.5C6 13.5 4.5 12 3 12.8C2 13.3 1 12.5 0.5 12Z" fill="url(#gsn)" stroke="#7e90aa"/><path d="M2.5 4.5H8.5M2.5 6.5H9.5M2.5 8.5H9.5" stroke="#3d66a8" stroke-width="1"/><path d="M0 12.5C1.5 13.5 3 12.5 4.5 13.2C6 14 7 12.5 9 13C10 13.2 11 12.8 11.5 12" stroke="#22334a" fill="none" stroke-width="1.1"/></svg>
<div class="tr" style="left:63px;top:424px">std::string  (st Tab)</div>
</div>
<div class="a" style="left:193px;top:153px;width:16px;height:428px;background:#f0f0f0"></div>
<div class="a" style="left:193px;top:260px;width:15px;height:156px;background:#cdcdcd"></div>
<svg style="left:197px;top:160px" width="8" height="7" viewBox="0 0 8 7"><path d="M0.8 5.5L4 2L7.2 5.5" fill="none" stroke="#606060" stroke-width="1.8"/></svg>
<svg style="left:197px;top:570px" width="8" height="7" viewBox="0 0 8 7"><path d="M0.8 1.5L4 5L7.2 1.5" fill="none" stroke="#606060" stroke-width="1.8"/></svg>
<div class="a" style="left:2px;top:581px;width:208px;height:17px;background:#f0f0f0"></div>
<div class="a" style="left:20px;top:582px;width:105px;height:15px;background:#cdcdcd"></div>
<svg style="left:8px;top:585px" width="7" height="8" viewBox="0 0 7 8"><path d="M5.5 0.8L2 4L5.5 7.2" fill="none" stroke="#606060" stroke-width="1.8"/></svg>
<svg style="left:181px;top:585px" width="7" height="8" viewBox="0 0 7 8"><path d="M1.5 0.8L5 4L1.5 7.2" fill="none" stroke="#606060" stroke-width="1.8"/></svg>
<svg style="left:194px;top:137px" width="8" height="8" viewBox="0 0 8 8"><path d="M0.8 0.8L7.2 7.2M7.2 0.8L0.8 7.2" stroke="#111" stroke-width="1.5"/></svg>
<div class="a" style="left:213px;top:130px;width:98px;height:27px;background:#fff;border:1px solid #e3e3e3;border-bottom:none"></div>
<div class="t" style="left:243px;top:136px;font-size:13px;color:#111">dup.txt</div>
<svg style="left:223px;top:134px" width="12" height="16" viewBox="0 0 12 16"><path d="M0.5 0.5H8.5L11.5 3.5V15.5H0.5Z" fill="#fff" stroke="#808080"/><path d="M8.5 0.5V3.5H11.5" fill="none" stroke="#808080"/><path d="M2 4.5H8M2 6.5H10M2 8.5H10M2 10.5H10M2 12.5H10" stroke="#6a6a6a"/></svg>
<svg style="left:294px;top:140px" width="8" height="8" viewBox="0 0 8 8"><path d="M0.5 0.5L7.5 7.5M7.5 0.5L0.5 7.5" stroke="#858585" stroke-width="1.3"/></svg>
<div class="a" style="left:311px;top:154px;width:586px;height:1px;background:#dedede"></div>
<div class="a" style="left:311px;top:155px;width:586px;height:1px;background:#fcfcfc"></div>
<div class="a" style="left:213px;top:156px;width:684px;height:442px;background:#fff;border-left:1px solid #e6e6e6"></div>
<div class="a" style="left:217px;top:156px;width:675px;height:438px;background:#322d28;border-top:1px solid #6e6e6e;border-left:1px solid #6e6e6e;overflow:hidden">
<div class="ed" style="left:9px;top:7px">00007FF84DD63670 <span class="bar hb">|</span> 8B 14 25 30 03 FE 7F</div>
<div class="ed" style="left:405.2px;top:7px"><span class="bar">|</span> <span class="kw">mov</span> <span class="rg">edx</span>,<span style="display:inline-block;transform:scaleX(1.14);transform-origin:0 0">dword ptr</span></div>
<div class="ed" style="left:9px;top:32px">ds:[7FFE0330]</div>
<div class="ed" style="left:157.3px;top:32px"><span class="bar">|</span><svg class="arw" width="8" height="12" viewBox="0 0 8 12"><path d="M4 0.5V10.5M1.2 7.5L4 10.5L6.8 7.5" fill="none" stroke="#4690d8" stroke-width="0.9"/></svg></div>
<div class="ed" style="left:9px;top:57px">00007FF84DD63677 <span class="bar hb">|</span> 8D 4E 40</div>
<div class="ed" style="left:375.0px;top:57px"><span class="bar">|</span> <span class="kw">lea</span> <span class="rg">ecx</span>,<span style="display:inline-block;transform:scaleX(1.14);transform-origin:0 0">dword ptr</span></div>
<div class="ed" style="left:9px;top:82px">ds:[rsi+40]</div>
<div class="ed" style="left:142.0px;top:82px"><span class="bar">|</span><svg class="arw" width="8" height="12" viewBox="0 0 8 12"><path d="M4 0.5V10.5M1.2 7.5L4 10.5L6.8 7.5" fill="none" stroke="#4690d8" stroke-width="0.9"/></svg></div>
<div class="ed" style="left:9px;top:107px">00007FF84DD6367A <span class="bar hb">|</span> 8B C2</div>
<div class="ed" style="left:369.4px;top:107px"><span class="bar">|</span> <span class="kw">mov</span> <span class="rg">eax</span>,<span class="rg">edx</span></div>
<div class="ed" style="left:617.6px;top:107px"><span class="bar">|</span><svg class="arw" width="8" height="12" viewBox="0 0 8 12"><path d="M4 0.5V10.5M1.2 7.5L4 10.5L6.8 7.5" fill="none" stroke="#4690d8" stroke-width="0.9"/></svg></div>
<div class="ed" style="left:9px;top:132px">00007FF84DD6367C <span class="bar hb">|</span> BB 01 00 00 C0</div>
<div class="ed" style="left:393.5px;top:132px"><span class="bar">|</span> <span class="kw">mov</span></div>
<div class="ed" style="left:9px;top:157px"><span class="rg">ebx</span>,C0000001</div>
<div class="ed" style="left:234.2px;top:157px"><span class="bar">|</span><svg class="arw" width="8" height="12" viewBox="0 0 8 12"><path d="M4 0.5V10.5M1.2 7.5L4 10.5L6.8 7.5" fill="none" stroke="#4690d8" stroke-width="0.9"/></svg></div>
<div class="ed" style="left:9px;top:182px">00007FF84DD63681 <span class="bar hb">|</span> 83 E0 3F</div>
<div class="ed" style="left:371.8px;top:182px"><span class="bar">|</span> <span class="kw">and</span> <span class="rg">eax</span>,3F</div>
<div class="ed" style="left:612.6px;top:182px"><span class="bar">|</span><svg class="arw" width="8" height="12" viewBox="0 0 8 12"><path d="M4 0.5V10.5M1.2 7.5L4 10.5L6.8 7.5" fill="none" stroke="#4690d8" stroke-width="0.9"/></svg></div>
<div class="ed" style="left:9px;top:207px">00007FF84DD63684 <span class="bar hb">|</span> 2B C8</div>
<div class="ed" style="left:366.8px;top:207px"><span class="bar">|</span> <span class="kw">sub</span> <span class="rg">ecx</span>,<span class="rg">eax</span></div>
<div class="ed" style="left:607.6px;top:207px"><span class="bar">|</span><svg class="arw" width="8" height="12" viewBox="0 0 8 12"><path d="M4 0.5V10.5M1.2 7.5L4 10.5L6.8 7.5" fill="none" stroke="#4690d8" stroke-width="0.9"/></svg></div>
<div class="ed" style="left:9px;top:232px">00007FF84DD63686 <span class="bar hb">|</span> 8B C2</div>
<div class="ed" style="left:366.8px;top:232px"><span class="bar">|</span> <span class="kw">mov</span> <span class="rg">eax</span>,<span class="rg">edx</span></div>
<div class="ed" style="left:615.9px;top:232px"><span class="bar">|</span><svg class="arw" width="8" height="12" viewBox="0 0 8 12"><path d="M4 0.5V10.5M1.2 7.5L4 10.5L6.8 7.5" fill="none" stroke="#4690d8" stroke-width="0.9"/></svg></div>
<div class="ed" style="left:9px;top:257px">00007FF84DD63688 <span class="bar hb">|</span> 49 D3 C8</div>
<div class="ed" style="left:376.8px;top:257px"><span class="bar">|</span> <span class="kw">ror</span> r8,cl</div>
<div class="ed" style="left:599.2px;top:257px"><span class="bar">|</span><svg class="arw" width="8" height="12" viewBox="0 0 8 12"><path d="M4 0.5V10.5M1.2 7.5L4 10.5L6.8 7.5" fill="none" stroke="#4690d8" stroke-width="0.9"/></svg></div>
<div class="ed" style="left:9px;top:282px">00007FF84DD6368B <span class="bar hb">|</span> 4C 33 C0</div>
<div class="ed" style="left:376.8px;top:282px"><span class="bar">|</span> <span class="kw">xor</span> r8,rax</div>
<div class="ed" style="left:607.6px;top:282px"><span class="bar">|</span><svg class="arw" width="8" height="12" viewBox="0 0 8 12"><path d="M4 0.5V10.5M1.2 7.5L4 10.5L6.8 7.5" fill="none" stroke="#4690d8" stroke-width="0.9"/></svg></div>
<div class="ed" style="left:9px;top:307px">00007FF84DD6368E <span class="bar hb">|</span> 4C 89 07</div>
<div class="ed" style="left:373.4px;top:307px"><span class="bar">|</span> <span class="kw">mov</span> <span style="display:inline-block;transform:scaleX(1.14);transform-origin:0 0">qword ptr</span></div>
<div class="ed" style="left:9px;top:332px">ds:[rdi],r8</div>
<div class="ed" style="left:155.0px;top:332px"><span class="bar">|</span><svg class="arw" width="8" height="12" viewBox="0 0 8 12"><path d="M4 0.5V10.5M1.2 7.5L4 10.5L6.8 7.5" fill="none" stroke="#4690d8" stroke-width="0.9"/></svg></div>
<div class="ed" style="left:9px;top:357px">00007FF84DD63691 <span class="bar hb">|</span> 0F 45 DE</div>
<div class="ed" style="left:375.1px;top:357px"><span class="bar">|</span> <span class="kw">cmovne</span> <span class="rg">ebx</span>,<span class="rg">esi</span></div>
<div class="ed" style="left:8.7px;top:382px"><span class="bar">|</span><svg class="arw" width="8" height="12" viewBox="0 0 8 12"><path d="M4 0.5V10.5M1.2 7.5L4 10.5L6.8 7.5" fill="none" stroke="#4690d8" stroke-width="0.9"/></svg></div>
<div class="ed" style="left:9px;top:407px">00007FF84DD63694 <span class="bar hb">|</span> E9 48 01 00 00</div>
<div class="ed" style="left:387.0px;top:407px"><span class="bar">|</span> <span class="kw">jmp</span></div>
<div class="ed" style="left:9px;top:432px">ntdll.7FF84DD637F1</div>
<div class="ed" style="left:255.5px;top:432px"><span class="bar">|</span><svg class="arw" width="8" height="12" viewBox="0 0 8 12"><path d="M4 0.5V10.5M1.2 7.5L4 10.5L6.8 7.5" fill="none" stroke="#4690d8" stroke-width="0.9"/></svg></div>
</div>
<div class="a" style="left:891px;top:156px;width:6px;height:421px;background:#fff"></div>
<div class="a" style="left:894px;top:156px;width:1px;height:421px;background:#dde3e6"></div>
<div class="a" style="left:875px;top:257px;width:16px;height:34px;background:#7c7c7c"></div>
<svg style="left:878px;top:165px" width="9" height="7" viewBox="0 0 9 7"><path d="M0.8 5.5L4.5 2L8.2 5.5" fill="none" stroke="#6a6a6a" stroke-width="1.8"/></svg>
<div class="hl" style="left:2px;top:598px;width:895px;background:#d0d0d0"></div>
<div class="a" style="left:2px;top:599px;width:895px;height:22px;background:#f0f0f0"></div>
<div class="st" style="left:4px;top:605px">11.4 KB (11,715 字节) , 111 行。</div>
<div class="st" style="left:432px;top:605px">x86 Assembler</div>
<div class="st" style="left:524px;top:605px">行 7,列 70</div>
<div class="st" style="left:594px;top:605px;letter-spacing:-0.2px">简体中文(GB2312)</div>
<div class="vs" style="left:520px;top:601px;height:19px;background:#dcdcdc"></div>
<div class="vs" style="left:591px;top:601px;height:19px;background:#dcdcdc"></div>
<div class="vs" style="left:699px;top:601px;height:19px;background:#dcdcdc"></div>
<div class="vs" style="left:731px;top:601px;height:19px;background:#dcdcdc"></div>
<div class="vs" style="left:751px;top:601px;height:19px;background:#dcdcdc"></div>
<div class="vs" style="left:787px;top:601px;height:19px;background:#dcdcdc"></div>
<div class="vs" style="left:819px;top:601px;height:19px;background:#dcdcdc"></div>
<div class="vs" style="left:839px;top:601px;height:19px;background:#dcdcdc"></div>
<div class="vs" style="left:875px;top:601px;height:19px;background:#dcdcdc"></div>
<div class="vs" style="left:895px;top:601px;height:19px;background:#dcdcdc"></div>
<div class="a" style="left:0;top:31px;width:2px;height:592px;background:#4a7a84"></div>
<div class="a" style="left:897px;top:31px;width:1px;height:546px;background:#4a7884"></div>
<div class="a" style="left:891px;top:577px;width:7px;height:1px;background:#c89ac8"></div>
<div class="a" style="left:891px;top:578px;width:7px;height:15px;background:#322d28"></div>
<div class="a" style="left:0;top:621px;width:898px;height:1px;background:#e4f8f8"></div>
<div class="a" style="left:0;top:622px;width:898px;height:1px;background:#3a7080"></div>
</body></html>
